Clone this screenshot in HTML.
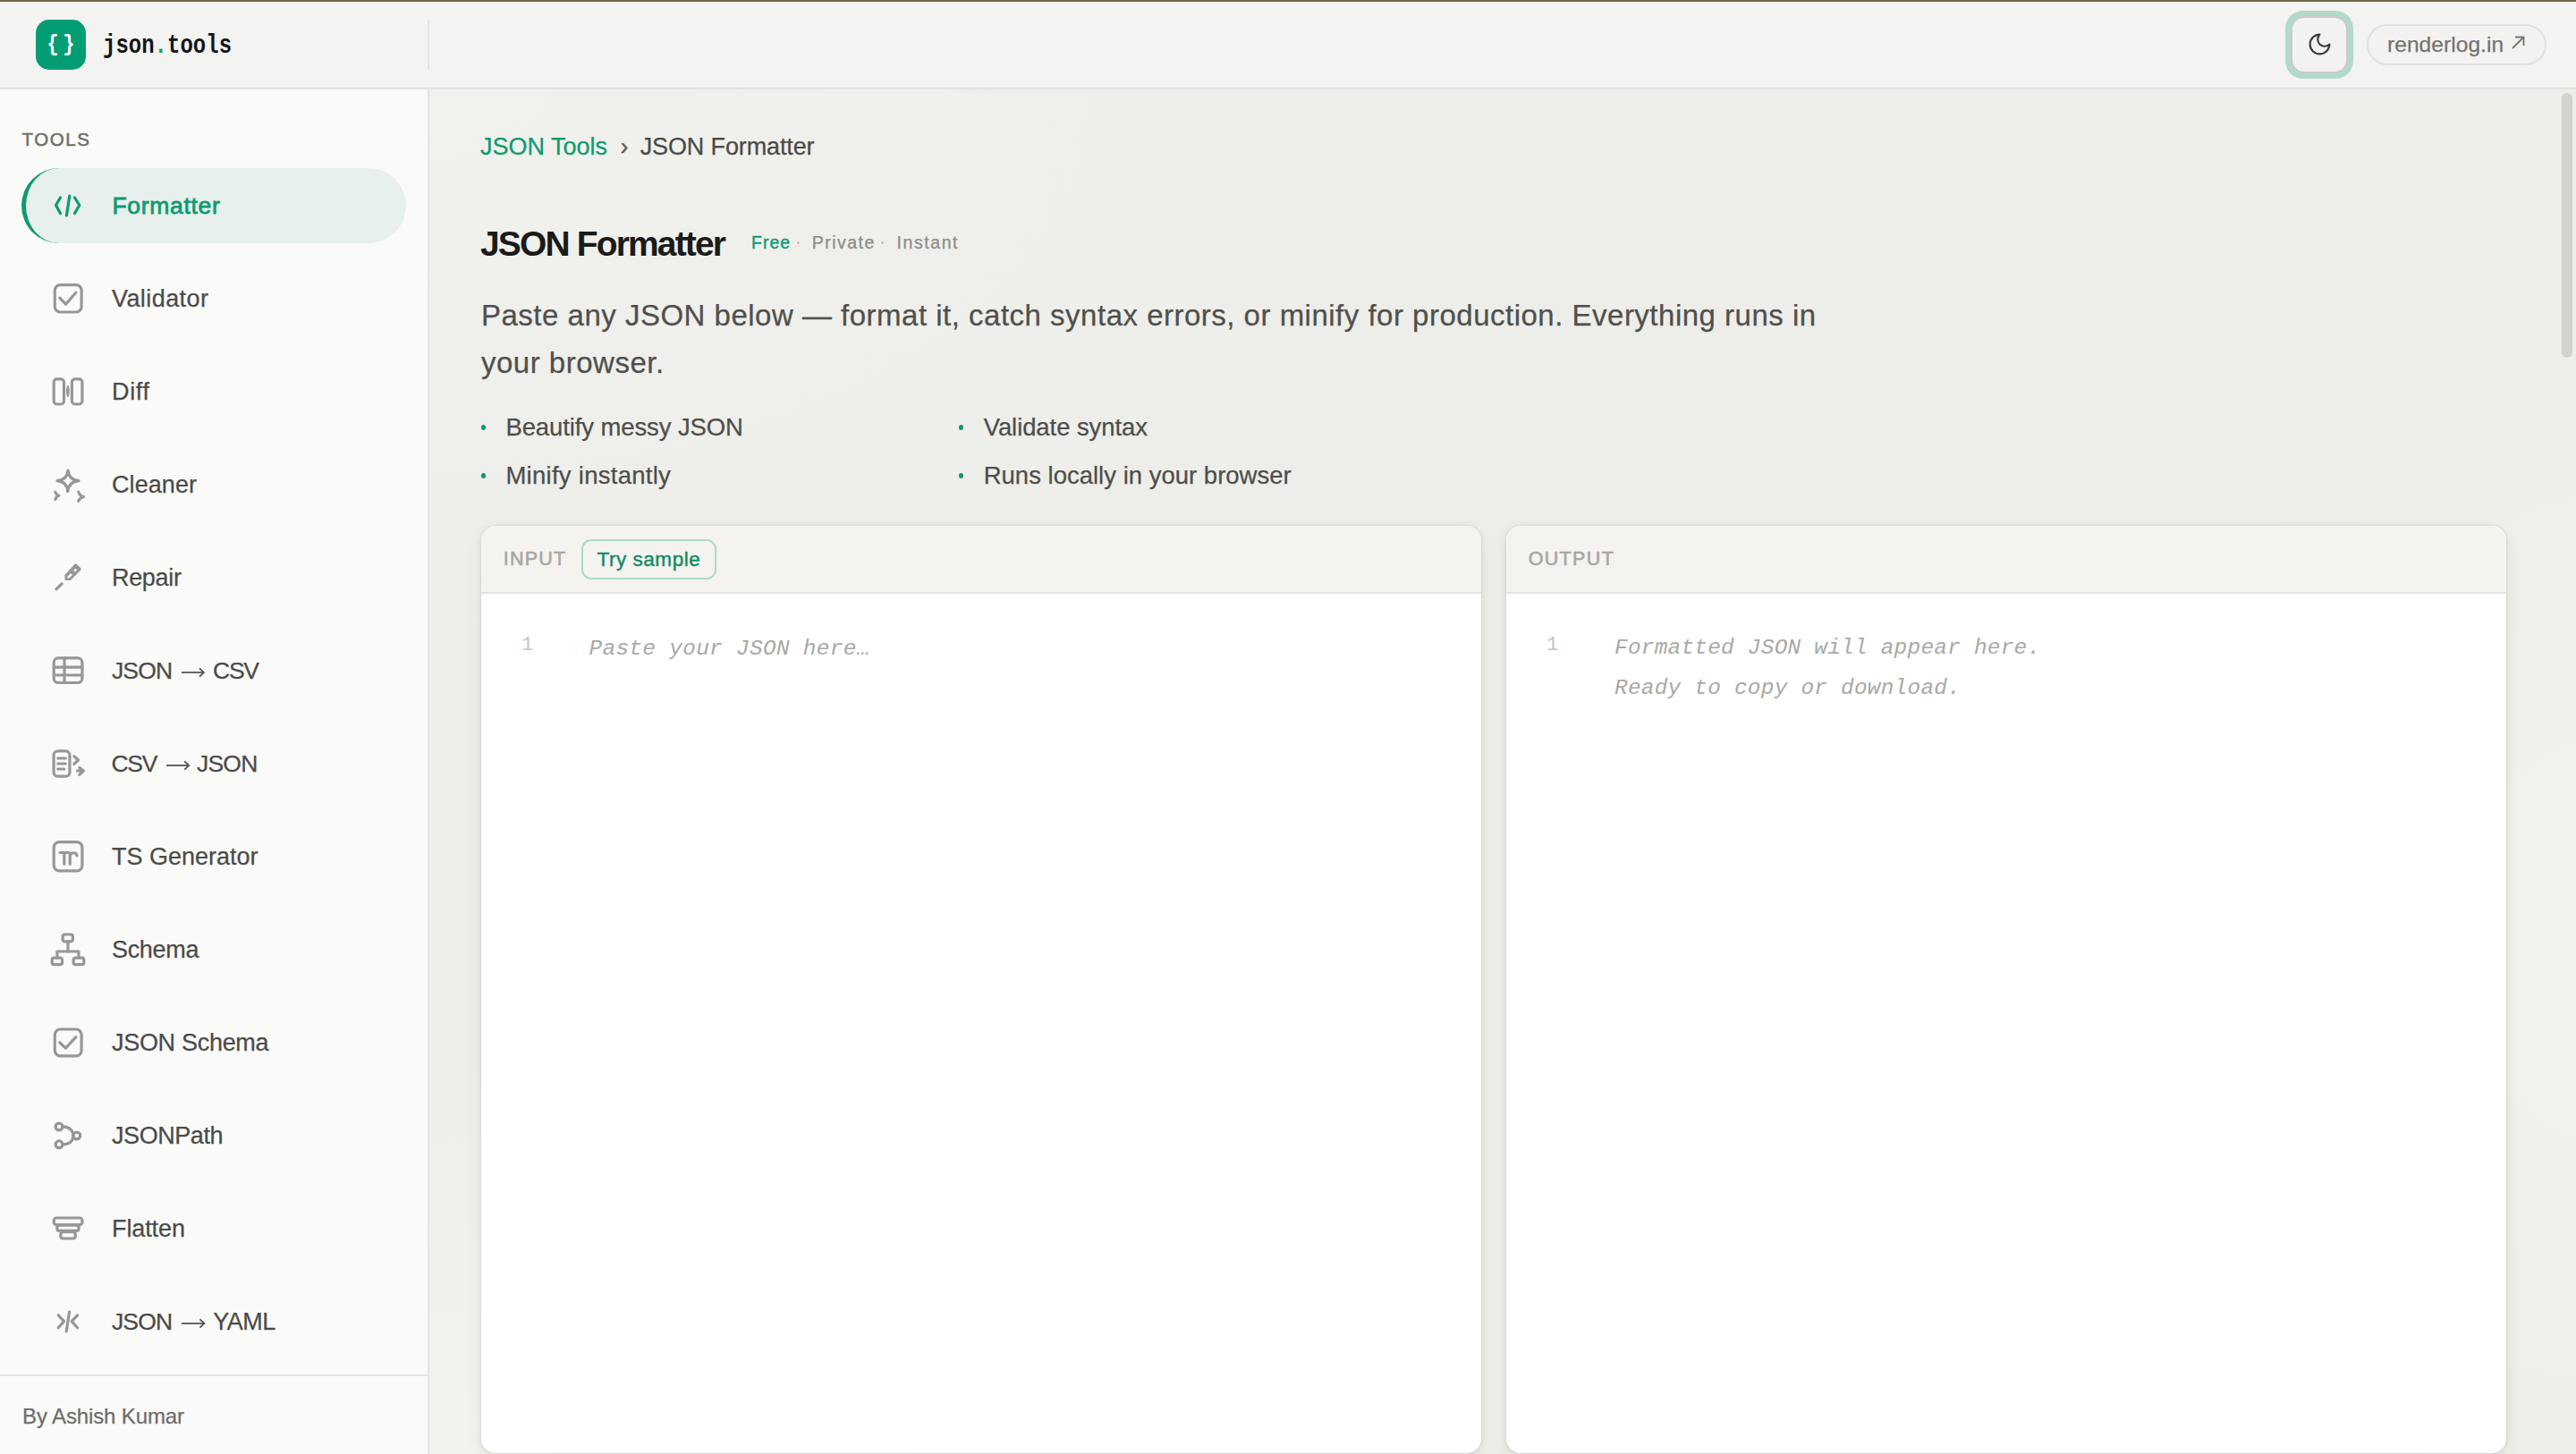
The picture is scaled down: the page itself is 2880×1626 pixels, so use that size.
<!DOCTYPE html><html><head><meta charset="utf-8"><title>JSON Formatter</title><style>
*{box-sizing:border-box;margin:0;padding:0}
html,body{width:2880px;height:1626px;overflow:hidden}
body{position:relative;font-family:'Liberation Sans', sans-serif;background:#ecebe7;}
.t{position:absolute;white-space:nowrap}
.s{-webkit-text-stroke:0.25px currentColor}
.a{position:absolute}
svg{position:absolute;overflow:visible}
</style></head><body><div class="a" style="left:480px;top:100px;width:2400px;height:1526px;background:radial-gradient(1200px 700px at 0px 0px,rgba(255,255,252,0.22),rgba(255,255,252,0) 100%),radial-gradient(700px 700px at 2500px 950px,rgba(255,255,252,0.3),rgba(255,255,252,0) 100%),radial-gradient(600px 600px at 0px 1626px,rgba(255,255,252,0.35),rgba(255,255,252,0) 100%),#edede9"></div>
<div class="a" style="left:0;top:0;width:2880px;height:2px;background:#6e6c40"></div>
<div class="a" style="left:0;top:2px;width:2880px;height:96px;background:#f3f3f1"></div>
<div class="a" style="left:0;top:98px;width:2880px;height:2px;background:#e3e2dd"></div>
<div class="a" style="left:40px;top:22px;width:56px;height:56px;border-radius:15px;background:#039d74"></div>
<div class="t" style="left:50px;top:35px;width:36px;height:32px;font-family:'Liberation Mono', monospace;font-weight:700;font-size:22px;line-height:32px;color:#fff;letter-spacing:0;transform:scaleY(1.15);transform-origin:50% 50%;text-align:center">{&#8201;}</div>
<div class="t" style="left:115px;top:33.5px;font-family:'Liberation Mono', monospace;font-weight:700;font-size:24px;line-height:40px;color:#161616;transform:scaleY(1.2);transform-origin:0 28.6px">json<span style="color:#0f9a71">.</span>tools</div>
<div class="a" style="left:478px;top:22px;width:2px;height:56px;background:#e3e3de"></div>
<div class="a" style="left:2555px;top:12px;width:76px;height:76px;border-radius:20px;background:#b3d9cb"></div>
<div class="a" style="left:2561px;top:18px;width:64px;height:64px;border-radius:15px;background:#f2f2f0;border:2px solid #cbcbc7"></div>
<svg style="left:2578.7px;top:35px" width="29" height="29" viewBox="0 0 24 24" fill="none" stroke="#3a3a38" stroke-width="1.75" stroke-linecap="round" stroke-linejoin="round"><path d="M12 3a6 6 0 0 0 9 9 9 9 0 1 1-9-9Z"/></svg>
<div class="a" style="left:2646px;top:27px;width:201px;height:46px;border-radius:23px;border:2px solid #e1e0dc;background:#f3f2f0"></div>
<div class="t s" style="left:2669.00px;top:33.88px;font-size:24.5px;line-height:31.85px;color:#737370;letter-spacing:0.064px;">renderlog.in</div>
<svg style="left:2808px;top:40px" width="15" height="15" viewBox="0 0 15 15" fill="none" stroke="#737370" stroke-width="1.8" stroke-linecap="butt"><line x1="1" y1="14" x2="13.5" y2="1.5"/><polyline points="4,1.5 13.5,1.5 13.5,11"/></svg>
<div class="a" style="left:0;top:100px;width:478px;height:1526px;background:#fafaf8"></div>
<div class="a" style="left:478px;top:100px;width:2px;height:1526px;background:#e4e4e0"></div>
<div class="t" style="left:24.60px;top:142.87px;font-size:20.5px;line-height:26.65px;color:#6f6f6b;letter-spacing:1.550px;-webkit-text-stroke:0.55px currentColor;">TOOLS</div>
<div class="a" style="left:24px;top:188px;width:430px;height:84px;border-radius:42px;background:#e7f0ec;border-left:5px solid #0f9a71"></div>
<div class="t" style="left:125.40px;top:213.19px;font-size:26.5px;line-height:34.45px;color:#0f9a71;letter-spacing:0.688px;-webkit-text-stroke:0.8px currentColor;">Formatter</div>
<div class="t s" style="left:125.00px;top:316.69px;font-size:27px;line-height:35.1px;color:#4b4b49;letter-spacing:0.425px;">Validator</div>
<div class="t s" style="left:125.00px;top:420.69px;font-size:27px;line-height:35.1px;color:#4b4b49;letter-spacing:0.667px;">Diff</div>
<div class="t s" style="left:125.00px;top:524.69px;font-size:27px;line-height:35.1px;color:#4b4b49;letter-spacing:0.083px;">Cleaner</div>
<div class="t s" style="left:125.00px;top:628.69px;font-size:27px;line-height:35.1px;color:#4b4b49;letter-spacing:-0.320px;">Repair</div>
<div class="t s" style="left:125.00px;top:940.69px;font-size:27px;line-height:35.1px;color:#4b4b49;">TS Generator</div>
<div class="t s" style="left:125.00px;top:1044.69px;font-size:27px;line-height:35.1px;color:#4b4b49;letter-spacing:-0.320px;">Schema</div>
<div class="t s" style="left:125.00px;top:1148.69px;font-size:27px;line-height:35.1px;color:#4b4b49;letter-spacing:-0.300px;">JSON Schema</div>
<div class="t s" style="left:125.00px;top:1252.69px;font-size:27px;line-height:35.1px;color:#4b4b49;letter-spacing:-0.429px;">JSONPath</div>
<div class="t s" style="left:125.00px;top:1356.69px;font-size:27px;line-height:35.1px;color:#4b4b49;letter-spacing:-0.100px;">Flatten</div>
<div class="t s" style="left:124.90px;top:733.19px;font-size:26.5px;line-height:34.45px;color:#4b4b49;letter-spacing:-0.800px;">JSON</div>
<svg style="left:203.2px;top:746.3px" width="25.5" height="12" viewBox="0 0 25.5 12" fill="none" stroke="#4b4b49" stroke-width="1.7" stroke-linecap="butt" stroke-linejoin="miter"><line x1="0" y1="6" x2="24.7" y2="6"/><polyline points="20.0,1.3 24.9,6 20.0,10.7"/></svg>
<div class="t s" style="left:238.10px;top:733.19px;font-size:26.5px;line-height:34.45px;color:#4b4b49;letter-spacing:-1.300px;">CSV</div>
<div class="t s" style="left:124.50px;top:837.19px;font-size:26.5px;line-height:34.45px;color:#4b4b49;letter-spacing:-1.300px;">CSV</div>
<svg style="left:185.7px;top:850.3px" width="25.8" height="12" viewBox="0 0 25.8 12" fill="none" stroke="#4b4b49" stroke-width="1.7" stroke-linecap="butt" stroke-linejoin="miter"><line x1="0" y1="6" x2="25.0" y2="6"/><polyline points="20.3,1.3 25.2,6 20.3,10.7"/></svg>
<div class="t s" style="left:220.00px;top:837.19px;font-size:26.5px;line-height:34.45px;color:#4b4b49;letter-spacing:-0.800px;">JSON</div>
<div class="t s" style="left:124.90px;top:1461.19px;font-size:26.5px;line-height:34.45px;color:#4b4b49;letter-spacing:-0.800px;">JSON</div>
<svg style="left:203.3px;top:1474.3px" width="26.0" height="12" viewBox="0 0 26.0 12" fill="none" stroke="#4b4b49" stroke-width="1.7" stroke-linecap="butt" stroke-linejoin="miter"><line x1="0" y1="6" x2="25.2" y2="6"/><polyline points="20.5,1.3 25.4,6 20.5,10.7"/></svg>
<div class="t s" style="left:238.30px;top:1460.69px;font-size:27px;line-height:35.1px;color:#4b4b49;letter-spacing:-0.533px;">YAML</div>
<div class="a" style="left:0;top:1537px;width:478px;height:2px;background:#e4e4e0"></div>
<div class="t s" style="left:25.00px;top:1568.18px;font-size:24px;line-height:31.2px;color:#6d6d6a;letter-spacing:-0.121px;">By Ashish Kumar</div>
<svg style="left:50px;top:205px" width="50" height="50" viewBox="0 0 50 50" fill="none" stroke="#0f9a71" stroke-width="3.2" stroke-linecap="round" stroke-linejoin="round"><polyline points="17.5,16 12.5,24.5 17.5,33.5"/><polyline points="33.5,16 38.8,24.5 33.5,33.5"/><line x1="27.8" y1="14" x2="24.4" y2="36"/></svg>
<svg style="left:50px;top:309px" width="50" height="50" viewBox="0 0 50 50" fill="none" stroke="#979795" stroke-width="3.2" stroke-linecap="round" stroke-linejoin="round"><rect x="11.3" y="9.6" width="29.8" height="30.4" rx="6"/><polyline points="16.8,24.2 23.5,31.2 34.8,18.3"/></svg>
<svg style="left:50px;top:1141px" width="50" height="50" viewBox="0 0 50 50" fill="none" stroke="#979795" stroke-width="3.2" stroke-linecap="round" stroke-linejoin="round"><rect x="11.3" y="10" width="29.8" height="29.8" rx="6"/><polyline points="16.8,24.8 23.3,31.2 34.8,18.8"/></svg>
<svg style="left:50px;top:413px" width="50" height="50" viewBox="0 0 50 50" fill="none" stroke="#979795" stroke-width="3.2" stroke-linecap="round" stroke-linejoin="round"><rect x="10.2" y="10.8" width="11.3" height="28.2" rx="3.5"/><rect x="30.4" y="10.8" width="11.5" height="28.2" rx="3.5"/><path d="M25.9 18.5 Q28.2 24.4 25.9 30.3 Q23.6 24.4 25.9 18.5Z" fill="#979795" stroke-width="1.6"/></svg>
<svg style="left:50px;top:517px" width="50" height="50" viewBox="0 0 50 50" fill="none" stroke="#979795" stroke-width="3.1" stroke-linecap="round" stroke-linejoin="round"><path d="M26 9 Q27 19.6 38 20.6 Q27 21.6 25.7 32.6 Q25 21.6 14 20.6 Q25 19.6 26 9Z"/><path d="M11.8 33.2 Q13.2 36.8 15.8 37.3 Q13.2 38 11.8 41.6"/><path d="M37.7 33.2 Q39.2 37.6 43.6 38.6 Q39.2 39.6 37.7 43.4"/></svg>
<svg style="left:50px;top:621px" width="50" height="50" viewBox="0 0 50 50"><line x1="12.9" y1="37.8" x2="19.1" y2="31.8" stroke="#979795" stroke-width="3.2" stroke-linecap="round"/><path d="M24 22.5 L24 26.5 L28 26.5 L39 15.5 L34.5 11 Z" fill="#979795" stroke="#979795" stroke-width="3.2" stroke-linejoin="round"/><line x1="26.6" y1="24.4" x2="29.4" y2="21.6" stroke="#f9f9f7" stroke-width="2.6" stroke-linecap="round"/><line x1="33.8" y1="17.1" x2="34.6" y2="16.3" stroke="#f9f9f7" stroke-width="2.6" stroke-linecap="round"/></svg>
<svg style="left:50px;top:725px" width="50" height="50" viewBox="0 0 50 50" fill="none" stroke="#979795" stroke-width="3.2" stroke-linecap="round" stroke-linejoin="round"><rect x="10.2" y="10.9" width="31.7" height="27.6" rx="5"/><line x1="10.2" y1="21.2" x2="41.9" y2="21.2"/><line x1="10.2" y1="30" x2="41.9" y2="30"/><line x1="22" y1="10.9" x2="22" y2="38.5"/></svg>
<svg style="left:50px;top:829px" width="50" height="50" viewBox="0 0 50 50" fill="none" stroke="#979795" stroke-width="3.2" stroke-linecap="round" stroke-linejoin="round"><rect x="10.05" y="10.95" width="17.9" height="28.2" rx="4.5"/><line x1="14.7" y1="19" x2="23.3" y2="19"/><line x1="14.7" y1="25" x2="23.3" y2="25"/><line x1="14.7" y1="31" x2="21.7" y2="31"/><polyline points="32.8,16.6 37.6,21 32.8,25.4"/><polyline points="38.8,29.4 43.4,33 38.8,37.4"/><line x1="36.4" y1="33" x2="42.4" y2="33"/></svg>
<svg style="left:50px;top:933px" width="50" height="50" viewBox="0 0 50 50" fill="none" stroke="#979795" stroke-width="3.2" stroke-linecap="round" stroke-linejoin="round"><rect x="10.2" y="8.6" width="31.7" height="32.2" rx="6"/><line x1="17.2" y1="20.5" x2="26.5" y2="20.5"/><line x1="21.8" y1="20.5" x2="21.8" y2="33.2"/><path d="M28.2 33.2 L28.2 20.8 M28.2 23.5 C29.5 20.8 32.5 20.2 34.6 21.2 C35.6 21.8 35.9 22.8 36 23.8"/></svg>
<svg style="left:50px;top:1037px" width="50" height="50" viewBox="0 0 50 50" fill="none" stroke="#979795" stroke-width="3.2" stroke-linecap="round" stroke-linejoin="round"><rect x="20.1" y="8" width="11.3" height="7.8" rx="2.2"/><rect x="8.2" y="34.2" width="11.3" height="7.5" rx="2.2"/><rect x="32.2" y="34.2" width="11.6" height="7.5" rx="2.2"/><line x1="26" y1="15.8" x2="26" y2="27"/><path d="M13.9 34.2 V27 H38 V34.2"/></svg>
<svg style="left:50px;top:1245px" width="50" height="50" viewBox="0 0 50 50" fill="none" stroke="#979795" stroke-width="3.3" stroke-linecap="round" stroke-linejoin="round"><circle cx="16" cy="15" r="3.85"/><circle cx="35.8" cy="25" r="3.85"/><circle cx="16" cy="34.8" r="3.85"/><path d="M19.9 15 C27.2 15 31.9 19 31.9 25 C31.9 31 27.2 34.8 19.9 34.8"/></svg>
<svg style="left:50px;top:1349px" width="50" height="50" viewBox="0 0 50 50" fill="none" stroke="#979795" stroke-width="3.2" stroke-linecap="round" stroke-linejoin="round"><rect x="10.2" y="13" width="31.8" height="7.8" rx="3"/><rect x="13.9" y="20.8" width="24.1" height="6.6" rx="2.5"/><rect x="17.9" y="28.6" width="16.3" height="7.4" rx="2.5"/></svg>
<svg style="left:50px;top:1453px" width="50" height="50" viewBox="0 0 50 50" fill="none" stroke="#979795" stroke-width="3.2" stroke-linecap="round" stroke-linejoin="round"><polyline points="15.2,17.8 21.6,24.6 15.2,31.8"/><polyline points="36.6,17.8 30.1,24.6 36.6,31.8"/><line x1="27.6" y1="14" x2="24.2" y2="35.8"/></svg>
<div class="t s" style="left:537.10px;top:146.59px;font-size:27px;line-height:35.1px;color:#0f9a71;letter-spacing:-0.011px;">JSON Tools</div>
<div class="t s" style="left:693.60px;top:146.59px;font-size:27px;line-height:35.1px;color:#555552;">&#8250;</div>
<div class="t s" style="left:715.70px;top:146.59px;font-size:27px;line-height:35.1px;color:#4a4a47;letter-spacing:-0.131px;">JSON Formatter</div>
<div class="t" style="left:537.00px;top:247.93px;font-size:39px;line-height:50.7px;color:#1b1b1a;font-weight:700;letter-spacing:-1.854px;">JSON Formatter</div>
<div class="t" style="left:840.10px;top:259.46px;font-size:19.5px;line-height:25.35px;color:#0f9a71;letter-spacing:0.967px;-webkit-text-stroke:0.4px currentColor;">Free</div>
<div class="a" style="left:890.8px;top:269.5px;width:3px;height:3px;border-radius:50%;background:#c4c4c0"></div>
<div class="t s" style="left:907.80px;top:259.46px;font-size:19.5px;line-height:25.35px;color:#8c8c88;letter-spacing:1.467px;">Private</div>
<div class="a" style="left:984.8px;top:269.5px;width:3px;height:3px;border-radius:50%;background:#c4c4c0"></div>
<div class="t s" style="left:1002.60px;top:259.46px;font-size:19.5px;line-height:25.35px;color:#8c8c88;letter-spacing:1.567px;">Instant</div>
<div class="t s" style="left:538.00px;top:332.41px;font-size:33px;line-height:42.9px;color:#50504c;letter-spacing:0.497px;">Paste any JSON below &#8212; format it, catch syntax errors, or minify for production. Everything runs in</div>
<div class="t s" style="left:538.00px;top:385.41px;font-size:33px;line-height:42.9px;color:#50504c;letter-spacing:0.500px;">your browser.</div>
<div class="t s" style="left:565.40px;top:460.39px;font-size:27.5px;line-height:35.75px;color:#4e4e4a;letter-spacing:-0.106px;">Beautify messy JSON</div>
<div class="t s" style="left:1099.70px;top:459.89px;font-size:27.5px;line-height:35.75px;color:#4e4e4a;letter-spacing:-0.086px;">Validate syntax</div>
<div class="t s" style="left:565.40px;top:513.89px;font-size:27.5px;line-height:35.75px;color:#4e4e4a;letter-spacing:0.273px;">Minify instantly</div>
<div class="t s" style="left:1099.70px;top:513.89px;font-size:27.5px;line-height:35.75px;color:#4e4e4a;letter-spacing:0.004px;">Runs locally in your browser</div>
<div class="a" style="left:538.0px;top:475.3px;width:5.4px;height:5.4px;border-radius:50%;background:#0f9a71"></div>
<div class="a" style="left:538.0px;top:529.3px;width:5.4px;height:5.4px;border-radius:50%;background:#0f9a71"></div>
<div class="a" style="left:1072.1px;top:475.3px;width:5.4px;height:5.4px;border-radius:50%;background:#0f9a71"></div>
<div class="a" style="left:1072.1px;top:529.3px;width:5.4px;height:5.4px;border-radius:50%;background:#0f9a71"></div>
<div class="a" style="left:538px;top:588px;width:1118px;height:1037px;border-radius:16px;background:#fff;box-shadow:0 0 3px rgba(0,0,0,0.11),0 2px 10px rgba(0,0,0,0.07),0 8px 26px rgba(0,0,0,0.04);overflow:hidden"><div class="a" style="left:0;top:0;width:100%;height:76px;background:#f4f3f0;border-bottom:2px solid #e3e2de"></div></div>
<div class="a" style="left:1684px;top:588px;width:1118px;height:1037px;border-radius:16px;background:#fff;box-shadow:0 0 3px rgba(0,0,0,0.11),0 2px 10px rgba(0,0,0,0.07),0 8px 26px rgba(0,0,0,0.04);overflow:hidden"><div class="a" style="left:0;top:0;width:100%;height:76px;background:#f4f3f0;border-bottom:2px solid #e3e2de"></div></div>
<div class="t" style="left:562.80px;top:611.87px;font-size:21.5px;line-height:27.95px;color:#a8a7a2;letter-spacing:1.200px;-webkit-text-stroke:0.6px currentColor;">INPUT</div>
<div class="a" style="left:649.5px;top:603.3px;width:151px;height:44.5px;border-radius:11px;border:2px solid #aadcc8;background:#f4f3f0"></div>
<div class="t" style="left:667.50px;top:610.87px;font-size:22.5px;line-height:29.25px;color:#138b68;letter-spacing:0.533px;-webkit-text-stroke:0.45px currentColor;">Try sample</div>
<div class="t" style="left:1708.70px;top:611.87px;font-size:21.5px;line-height:27.95px;color:#a8a7a2;letter-spacing:1.340px;-webkit-text-stroke:0.6px currentColor;">OUTPUT</div>
<div class="t" style="left:583.00px;top:708.45px;font-size:22px;line-height:28.6px;color:#c3c3bf;font-family:'Liberation Mono', monospace;">1</div>
<div class="t" style="left:658.50px;top:709.56px;font-size:24.5px;line-height:31.85px;color:#a9a9a5;letter-spacing:0.255px;font-family:'Liberation Mono', monospace;font-style:italic;">Paste your JSON here&#8230;</div>
<div class="t" style="left:1728.90px;top:708.45px;font-size:22px;line-height:28.6px;color:#c3c3bf;font-family:'Liberation Mono', monospace;">1</div>
<div class="t" style="left:1805.00px;top:709.36px;font-size:24.5px;line-height:31.85px;color:#a9a9a5;letter-spacing:0.184px;font-family:'Liberation Mono', monospace;font-style:italic;">Formatted JSON will appear here.</div>
<div class="t" style="left:1805.00px;top:754.36px;font-size:24.5px;line-height:31.85px;color:#a9a9a5;letter-spacing:0.184px;font-family:'Liberation Mono', monospace;font-style:italic;">Ready to copy or download.</div>
<div class="a" style="left:2864px;top:103.5px;width:12px;height:296px;border-radius:6px;background:#d3d2cd"></div></body></html>
